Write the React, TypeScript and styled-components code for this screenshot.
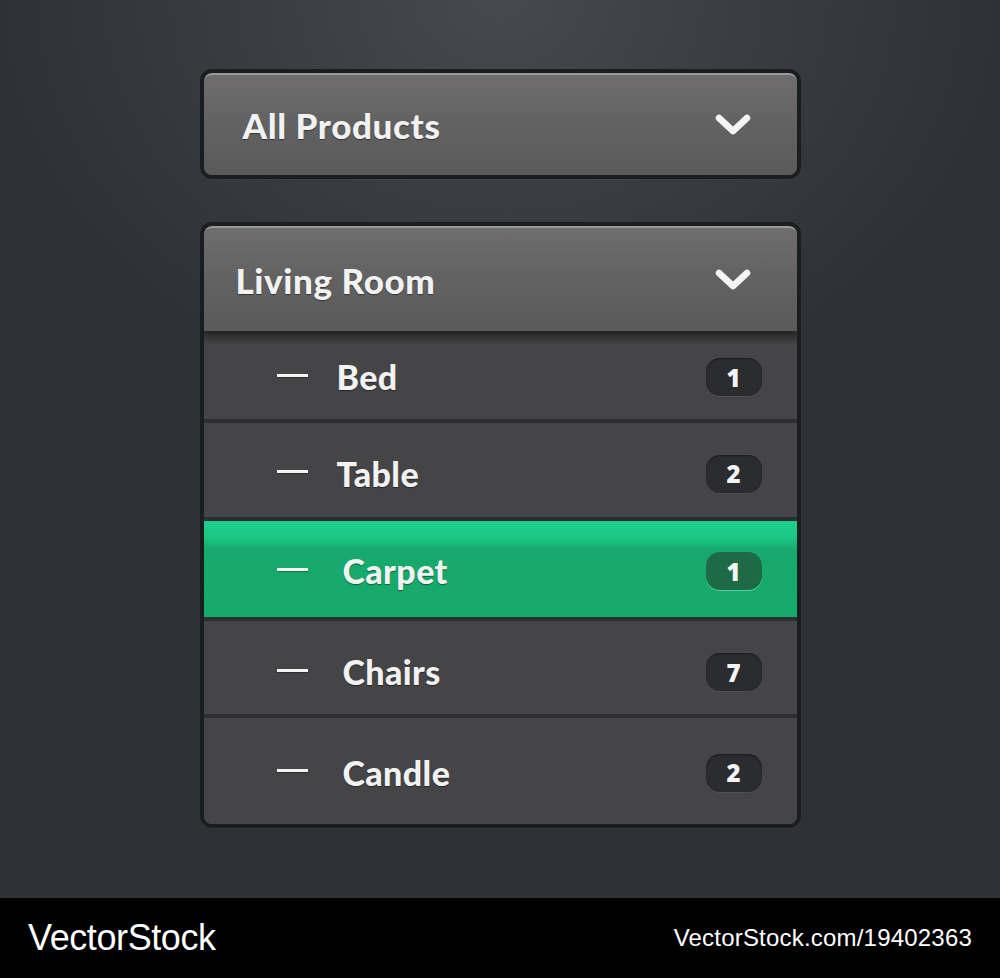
import React from "react";
import styled, { createGlobalStyle, css } from "styled-components";

const GlobalStyle = createGlobalStyle`
  html, body {
    margin: 0;
    padding: 0;
    background: #2b2f33;
  }
  body {
    font-family: "Lato", "Open Sans", sans-serif;
  }
`;

const Page = styled.div`
  width: 1000px;
  height: 978px;
  display: flex;
  flex-direction: column;
  background: radial-gradient(
    ellipse 520px 420px at 50% 0%,
    #464a4e 0%,
    #3a3e42 45%,
    #2d3135 100%
  );
`;

const Stage = styled.main`
  flex: 1;
  display: flex;
  flex-direction: column;
  align-items: center;
  padding-top: 69px;
  gap: 43px;
`;

const Card = styled.section`
  width: 593px;
  border: 4px solid #1b1e21;
  border-radius: 12px;
  overflow: hidden;
  background: #454547;
  box-shadow: 0 1px 0 rgba(255, 255, 255, 0.04);
`;

const Header = styled.header<{ $height: number; $indent: number }>`
  height: ${(p) => p.$height}px;
  box-sizing: border-box;
  display: flex;
  align-items: center;
  justify-content: space-between;
  padding: 0 46px 0 ${(p) => p.$indent}px;
  background: linear-gradient(#6f6d6e 0%, #646364 45%, #5a5a5a 100%);
  border-top: 2px solid #9b999a;
  border-radius: 8px 8px 0 0;
  position: relative;
  z-index: 1;
  box-shadow: 0 4px 10px rgba(0, 0, 0, 0.45);
`;

const textLook = css`
  font-family: "Lato", sans-serif;
  font-weight: 900;
  color: #f2f2f2;
  text-shadow: 0 1px 1px rgba(0, 0, 0, 0.45);
`;

const Title = styled.h2`
  margin: 0;
  ${textLook}
  font-size: 35px;
  letter-spacing: 0.6px;
`;

const List = styled.ul`
  list-style: none;
  margin: 0;
  padding: 0;
`;

const Row = styled.li<{ $height: number; $drop: number; $active?: boolean }>`
  height: ${(p) => p.$height}px;
  box-sizing: border-box;
  display: flex;
  align-items: center;
  padding: ${(p) => p.$drop}px 35px 0 73px;
  background: #454547;
  border-top: 4px solid #2d2e30;

  &:first-child {
    border-top: none;
    background: linear-gradient(#333335 0px, #454547 14px);
  }

  ${(p) =>
    p.$active &&
    css`
      background: linear-gradient(
        #1dce8b 0%,
        #1bc583 18%,
        #17a96d 30%,
        #17aa6b 100%
      );
    `}
`;

const Dash = styled.span`
  width: 31px;
  height: 3px;
  margin-top: -3px;
  background: #f4f4f4;
  box-shadow: 0 1px 1px rgba(0, 0, 0, 0.35);
  flex-shrink: 0;
`;

const Label = styled.span<{ $gap: number }>`
  margin-left: ${(p) => p.$gap}px;
  flex: 1;
  ${textLook}
  font-size: 34px;
  letter-spacing: 0.4px;
`;

const Badge = styled.span<{ $active?: boolean }>`
  width: 56px;
  height: 38px;
  margin-top: 1px;
  border-radius: 14px;
  display: flex;
  align-items: center;
  justify-content: center;
  font-family: "Open Sans", sans-serif;
  font-weight: 800;
  font-size: 24px;
  color: #f4f4f4;
  background: ${(p) => (p.$active ? "#1e6a47" : "#2a2c2f")};
  box-shadow: ${(p) =>
    p.$active
      ? "0 1px 0 #4fd59a"
      : "inset 0 1px 2px rgba(0,0,0,0.4), 0 1px 0 rgba(255,255,255,0.06)"};
`;

const Footer = styled.footer`
  height: 80px;
  background: #000;
  display: flex;
  align-items: center;
  justify-content: space-between;
  padding: 0 28px;
  color: #fff;
  font-family: "Liberation Sans", sans-serif;
`;

const Brand = styled.span`
  font-size: 36px;
  letter-spacing: -0.4px;
`;

const Ref = styled.span`
  font-size: 24px;
  letter-spacing: 0.2px;
`;

const Chevron = () => (
  <svg width="36" height="24" viewBox="0 0 36 24">
    <path
      d="M4 5 L18 18 L32 5"
      fill="none"
      stroke="#f4f4f4"
      strokeWidth="6.5"
      strokeLinecap="round"
      strokeLinejoin="round"
    />
  </svg>
);

const items = [
  { name: "Bed", count: 1, height: 88, drop: 3, gap: 29 },
  { name: "Table", count: 2, height: 98, drop: 6, gap: 29 },
  { name: "Carpet", count: 1, height: 100, drop: 3, gap: 35, active: true },
  { name: "Chairs", count: 7, height: 97, drop: 8, gap: 35 },
  { name: "Candle", count: 2, height: 110, drop: 2, gap: 35 },
];

const App: React.FC = () => {
  return (
    <Page>
      <GlobalStyle />
      <Stage>
        <Card>
          <Header $height={102} $indent={39}>
            <Title>All Products</Title>
            <Chevron />
          </Header>
        </Card>
        <Card>
          <Header $height={105} $indent={32}>
            <Title>Living Room</Title>
            <Chevron />
          </Header>
          <List>
            {items.map((item) => (
              <Row
                key={item.name}
                $height={item.height}
                $drop={item.drop}
                $active={item.active}
              >
                <Dash />
                <Label $gap={item.gap}>{item.name}</Label>
                <Badge $active={item.active}>{item.count}</Badge>
              </Row>
            ))}
          </List>
        </Card>
      </Stage>
      <Footer>
        <Brand>VectorStock</Brand>
        <Ref>VectorStock.com/19402363</Ref>
      </Footer>
    </Page>
  );
};

export default App;
